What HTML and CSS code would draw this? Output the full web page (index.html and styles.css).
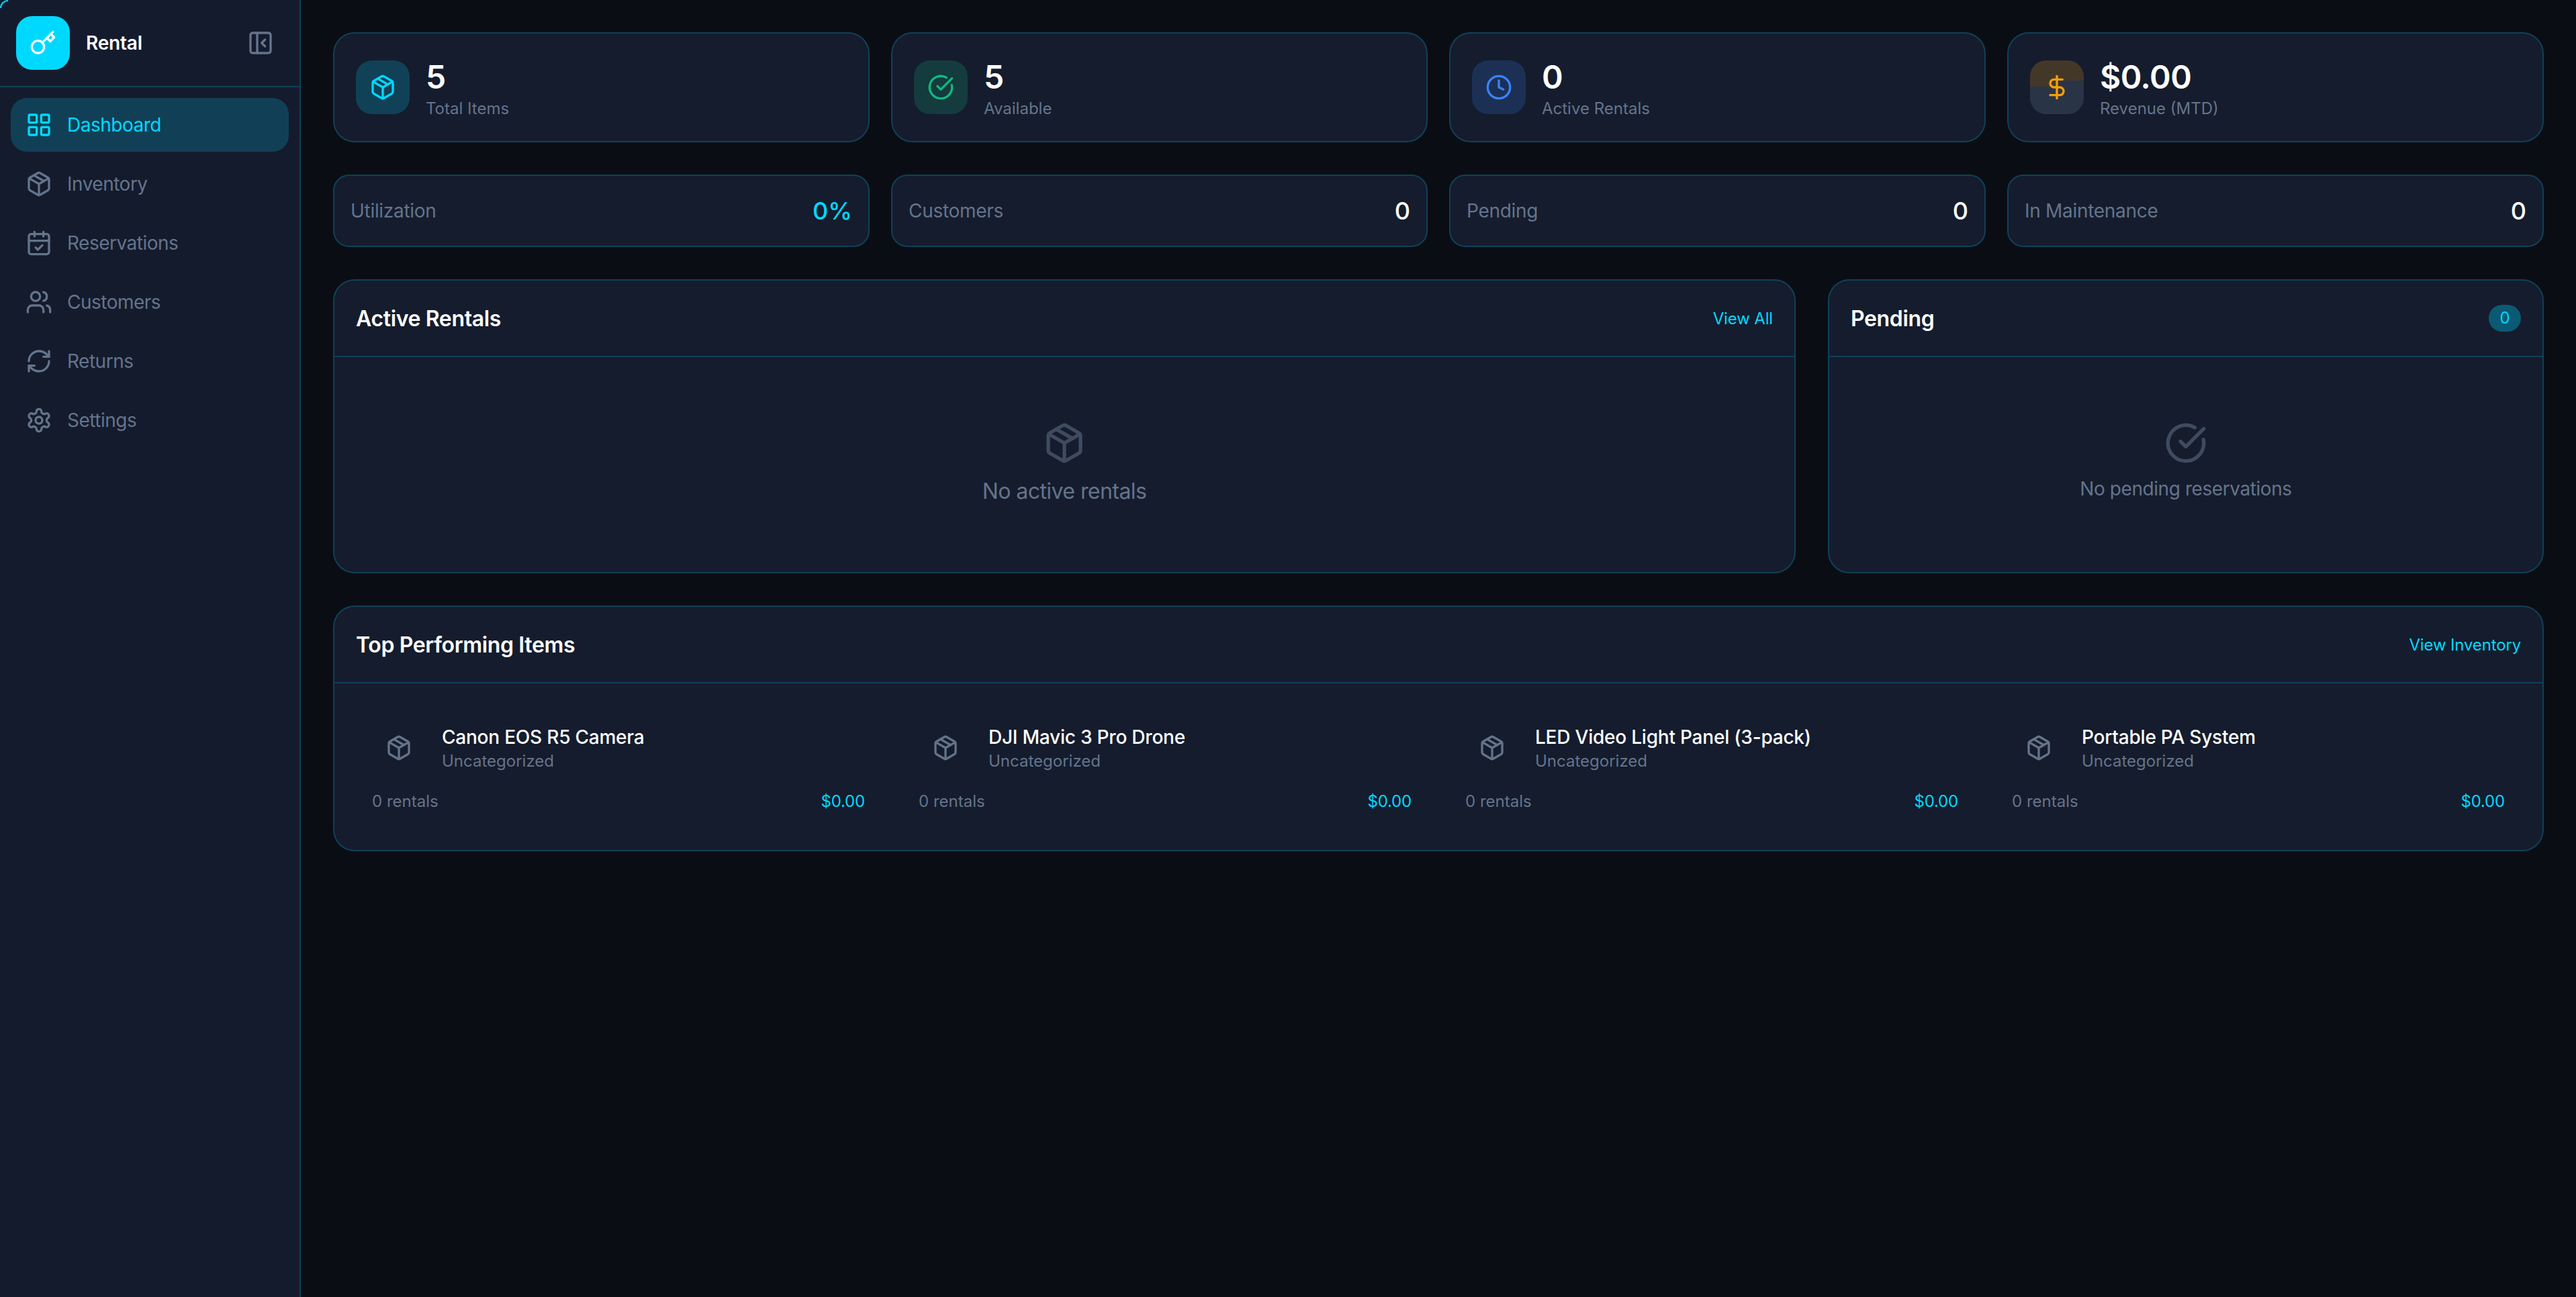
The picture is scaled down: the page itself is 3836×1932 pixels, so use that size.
FILE: index.html
```html
<!DOCTYPE html>
<html lang="en">
<head>
  <meta charset="UTF-8">
  <meta name="viewport" content="width=device-width, initial-scale=1.0">
  <title>Rental - Dashboard</title>
  <link rel="stylesheet" href="styles.css">
</head>
<body>
  <svg class="sprites" width="0" height="0" aria-hidden="true">
    <symbol id="i-key" viewBox="0 0 24 24"><circle cx="7.5" cy="15.5" r="5.5"/><path d="m21 2-9.6 9.6"/><path d="m15.5 7.5 3 3L22 7l-3-3"/></symbol>
    <symbol id="i-collapse" viewBox="0 0 24 24"><rect x="3" y="3" width="18" height="18" rx="2"/><path d="M9 3v18"/><path d="m16 15-3-3 3-3"/></symbol>
    <symbol id="i-grid" viewBox="0 0 24 24"><rect x="3" y="3" width="7" height="7" rx="1"/><rect x="14" y="3" width="7" height="7" rx="1"/><rect x="14" y="14" width="7" height="7" rx="1"/><rect x="3" y="14" width="7" height="7" rx="1"/></symbol>
    <symbol id="i-package" viewBox="0 0 24 24"><path d="m7.5 4.27 9 5.15"/><path d="M21 8a2 2 0 0 0-1-1.73l-7-4a2 2 0 0 0-2 0l-7 4A2 2 0 0 0 3 8v8a2 2 0 0 0 1 1.73l7 4a2 2 0 0 0 2 0l7-4A2 2 0 0 0 21 16Z"/><path d="m3.3 7 8.7 5 8.7-5"/><path d="M12 22V12"/></symbol>
    <symbol id="i-calendar" viewBox="0 0 24 24"><path d="M8 2v4"/><path d="M16 2v4"/><rect x="3" y="4" width="18" height="18" rx="2"/><path d="M3 10h18"/><path d="m9 16 2 2 4-4"/></symbol>
    <symbol id="i-users" viewBox="0 0 24 24"><path d="M16 21v-2a4 4 0 0 0-4-4H6a4 4 0 0 0-4 4v2"/><circle cx="9" cy="7" r="4"/><path d="M22 21v-2a4 4 0 0 0-3-3.87"/><path d="M16 3.13a4 4 0 0 1 0 7.75"/></symbol>
    <symbol id="i-refresh" viewBox="0 0 24 24"><path d="M3 12a9 9 0 0 1 9-9 9.75 9.75 0 0 1 6.74 2.74L21 8"/><path d="M21 3v5h-5"/><path d="M21 12a9 9 0 0 1-9 9 9.75 9.75 0 0 1-6.74-2.74L3 16"/><path d="M8 16H3v5"/></symbol>
    <symbol id="i-settings" viewBox="0 0 24 24"><path d="M12.22 2h-.44a2 2 0 0 0-2 2v.18a2 2 0 0 1-1 1.73l-.43.25a2 2 0 0 1-2 0l-.15-.08a2 2 0 0 0-2.73.73l-.22.38a2 2 0 0 0 .73 2.73l.15.1a2 2 0 0 1 1 1.72v.51a2 2 0 0 1-1 1.74l-.15.09a2 2 0 0 0-.73 2.73l.22.38a2 2 0 0 0 2.73.73l.15-.08a2 2 0 0 1 2 0l.43.25a2 2 0 0 1 1 1.73V20a2 2 0 0 0 2 2h.44a2 2 0 0 0 2-2v-.18a2 2 0 0 1 1-1.73l.43-.25a2 2 0 0 1 2 0l.15.08a2 2 0 0 0 2.73-.73l.22-.39a2 2 0 0 0-.73-2.73l-.15-.08a2 2 0 0 1-1-1.74v-.5a2 2 0 0 1 1-1.74l.15-.09a2 2 0 0 0 .73-2.73l-.22-.38a2 2 0 0 0-2.73-.73l-.15.08a2 2 0 0 1-2 0l-.43-.25a2 2 0 0 1-1-1.73V4a2 2 0 0 0-2-2z"/><circle cx="12" cy="12" r="3"/></symbol>
    <symbol id="i-check" viewBox="0 0 24 24"><path d="M21.801 10A10 10 0 1 1 17 3.335"/><path d="m9 11 3 3L22 4"/></symbol>
    <symbol id="i-clock" viewBox="0 0 24 24"><circle cx="12" cy="12" r="10"/><path d="M12 6v6l4 2"/></symbol>
    <symbol id="i-dollar" viewBox="0 0 24 24"><path d="M12 2v20"/><path d="M17 5H9.5a3.5 3.5 0 0 0 0 7h5a3.5 3.5 0 0 1 0 7H6"/></symbol>
  </svg>

  <div class="corner-arc"></div>

  <div class="app">
    <aside class="sidebar">
      <div class="brand">
        <div class="brand-logo"><svg class="icon"><use href="#i-key"/></svg></div>
        <span class="brand-name">Rental</span>
        <svg class="icon brand-toggle"><use href="#i-collapse"/></svg>
      </div>
      <nav class="nav">
        <a class="nav-item active"><svg class="icon"><use href="#i-grid"/></svg><span>Dashboard</span></a>
        <a class="nav-item"><svg class="icon"><use href="#i-package"/></svg><span>Inventory</span></a>
        <a class="nav-item"><svg class="icon"><use href="#i-calendar"/></svg><span>Reservations</span></a>
        <a class="nav-item"><svg class="icon"><use href="#i-users"/></svg><span>Customers</span></a>
        <a class="nav-item"><svg class="icon"><use href="#i-refresh"/></svg><span>Returns</span></a>
        <a class="nav-item"><svg class="icon"><use href="#i-settings"/></svg><span>Settings</span></a>
      </nav>
    </aside>

    <main class="main">
      <section class="stats">
        <div class="stat-card">
          <div class="stat-icon cyan"><svg class="icon"><use href="#i-package"/></svg></div>
          <div><div class="stat-value">5</div><div class="stat-label">Total Items</div></div>
        </div>
        <div class="stat-card">
          <div class="stat-icon green"><svg class="icon"><use href="#i-check"/></svg></div>
          <div><div class="stat-value">5</div><div class="stat-label">Available</div></div>
        </div>
        <div class="stat-card">
          <div class="stat-icon blue"><svg class="icon"><use href="#i-clock"/></svg></div>
          <div><div class="stat-value">0</div><div class="stat-label">Active Rentals</div></div>
        </div>
        <div class="stat-card">
          <div class="stat-icon amber"><svg class="icon"><use href="#i-dollar"/></svg></div>
          <div><div class="stat-value">$0.00</div><div class="stat-label">Revenue (MTD)</div></div>
        </div>
      </section>

      <section class="stats">
        <div class="mini-card"><span class="mini-label">Utilization</span><span class="mini-value accent">0%</span></div>
        <div class="mini-card"><span class="mini-label">Customers</span><span class="mini-value">0</span></div>
        <div class="mini-card"><span class="mini-label">Pending</span><span class="mini-value">0</span></div>
        <div class="mini-card"><span class="mini-label">In Maintenance</span><span class="mini-value">0</span></div>
      </section>

      <section class="panels">
        <div class="panel">
          <div class="panel-header">
            <h2>Active Rentals</h2>
            <a class="panel-link">View All</a>
          </div>
          <div class="empty">
            <svg class="icon empty-icon"><use href="#i-package"/></svg>
            <p class="empty-text large">No active rentals</p>
          </div>
        </div>
        <div class="panel">
          <div class="panel-header">
            <h2>Pending</h2>
            <span class="badge">0</span>
          </div>
          <div class="empty">
            <svg class="icon empty-icon"><use href="#i-check"/></svg>
            <p class="empty-text">No pending reservations</p>
          </div>
        </div>
      </section>

      <section class="panel">
        <div class="panel-header">
          <h2>Top Performing Items</h2>
          <a class="panel-link">View Inventory</a>
        </div>
        <div class="top-items">
          <div class="top-item">
            <div class="top-item-head">
              <div class="thumb"><svg class="icon"><use href="#i-package"/></svg></div>
              <div><div class="item-name">Canon EOS R5 Camera</div><div class="item-cat">Uncategorized</div></div>
            </div>
            <div class="top-item-foot"><span>0 rentals</span><span class="accent">$0.00</span></div>
          </div>
          <div class="top-item">
            <div class="top-item-head">
              <div class="thumb"><svg class="icon"><use href="#i-package"/></svg></div>
              <div><div class="item-name">DJI Mavic 3 Pro Drone</div><div class="item-cat">Uncategorized</div></div>
            </div>
            <div class="top-item-foot"><span>0 rentals</span><span class="accent">$0.00</span></div>
          </div>
          <div class="top-item">
            <div class="top-item-head">
              <div class="thumb"><svg class="icon"><use href="#i-package"/></svg></div>
              <div><div class="item-name">LED Video Light Panel (3-pack)</div><div class="item-cat">Uncategorized</div></div>
            </div>
            <div class="top-item-foot"><span>0 rentals</span><span class="accent">$0.00</span></div>
          </div>
          <div class="top-item">
            <div class="top-item-head">
              <div class="thumb"><svg class="icon"><use href="#i-package"/></svg></div>
              <div><div class="item-name">Portable PA System</div><div class="item-cat">Uncategorized</div></div>
            </div>
            <div class="top-item-foot"><span>0 rentals</span><span class="accent">$0.00</span></div>
          </div>
        </div>
      </section>
    </main>
  </div>
</body>
</html>
```

FILE: styles.css
```css
* {
  margin: 0;
  padding: 0;
  box-sizing: border-box;
}

body {
  font-family: 'Inter', 'Liberation Sans', sans-serif;
  background: #0a0e14;
  color: #fff;
  height: 100vh;
  overflow: hidden;
}

.sprites {
  position: absolute;
}

.icon {
  width: 40px;
  height: 40px;
  flex-shrink: 0;
  fill: none;
  stroke: currentColor;
  stroke-width: 2;
  stroke-linecap: round;
  stroke-linejoin: round;
}

/* Focus ring remnant in the window corner */
.corner-arc {
  position: fixed;
  top: 0;
  left: 0;
  width: 12px;
  height: 12px;
  border-top: 2px solid #00d9ff;
  border-left: 2px solid #00d9ff;
  border-top-left-radius: 12px;
  z-index: 10;
}

.app {
  display: flex;
  height: 100%;
}

/* Sidebar */
.sidebar {
  width: 448px;
  flex-shrink: 0;
  background: #141b2d;
  border-right: 2px solid #104157;
}

.brand {
  display: flex;
  align-items: center;
  gap: 24px;
  height: 130px;
  padding: 0 38px 0 24px;
  border-bottom: 2px solid #104157;
}

.brand-logo {
  width: 80px;
  height: 80px;
  display: flex;
  align-items: center;
  justify-content: center;
  background: #00d9ff;
  border-radius: 24px;
  color: #fff;
}

.brand-name {
  flex: 1;
  font-size: 28px;
  font-weight: 600;
  letter-spacing: -0.2px;
}

.brand-toggle {
  color: #64748b;
}

.nav {
  display: flex;
  flex-direction: column;
  gap: 8px;
  padding: 16px;
}

.nav-item {
  display: flex;
  align-items: center;
  gap: 22px;
  height: 80px;
  padding: 0 22px;
  border-radius: 24px;
  font-size: 28px;
  letter-spacing: -0.5px;
  color: #64748b;
}

.nav-item.active {
  background: #114056;
  color: #00d9ff;
}

/* Main */
.main {
  flex: 1;
  min-width: 0;
  padding: 48px;
  display: flex;
  flex-direction: column;
  gap: 48px;
}

.stats {
  display: grid;
  grid-template-columns: repeat(4, 1fr);
  gap: 32px;
}

.stat-card,
.mini-card,
.panel {
  background: #151c2d;
  border: 2px solid #104157;
}

.stat-card {
  display: flex;
  align-items: center;
  gap: 24px;
  padding: 32px;
  border-radius: 32px;
}

.stat-icon {
  width: 80px;
  height: 80px;
  display: flex;
  align-items: center;
  justify-content: center;
  border-radius: 24px;
}

.stat-icon.cyan { background: #104157; color: #00d9ff; }
.stat-icon.green { background: #143b3e; color: #10b981; }
.stat-icon.blue { background: #1c3056; color: #3b82f6; }

/* Two tone tile, the step sits behind the glyph */
.stat-icon.amber {
  color: #f59e0b;
  background-color: #2a3447;
  background-image: linear-gradient(#433828, #433828), linear-gradient(#433828, #433828);
  background-size: 50% 39px, 50% 30px;
  background-position: left top, right top;
  background-repeat: no-repeat;
}

.stat-value {
  font-size: 48px;
  line-height: 66px;
  margin-bottom: -2px;
  font-weight: 600;
  letter-spacing: -0.5px;
}

.stat-label {
  font-size: 24px;
  line-height: 32px;
  color: #64748b;
}

.mini-card {
  display: flex;
  align-items: center;
  justify-content: space-between;
  padding: 24px;
  border-radius: 24px;
}

.mini-label {
  font-size: 28px;
  letter-spacing: -0.3px;
  color: #64748b;
}

.mini-value {
  font-size: 36px;
  line-height: 56px;
  font-weight: 500;
}

.accent {
  color: #00d9ff;
}

.panels {
  display: grid;
  grid-template-columns: 2178px 1fr;
  gap: 48px;
}

.panel {
  border-radius: 32px;
}

.panel-header {
  display: flex;
  align-items: center;
  justify-content: space-between;
  height: 114px;
  padding: 0 32px;
  border-bottom: 2px solid #104157;
}

.panel-header h2 {
  margin-top: 2px;
  font-size: 32px;
  line-height: 48px;
  font-weight: 600;
  letter-spacing: -0.36px;
}

.panel-link {
  font-size: 24px;
  letter-spacing: -0.15px;
  color: #00d9ff;
}

.badge {
  min-width: 48px;
  height: 40px;
  padding: 0 16px;
  border-radius: 20px;
  background: #0b5a73;
  color: #00d9ff;
  font-size: 24px;
  line-height: 40px;
  text-align: center;
}

.empty {
  display: flex;
  flex-direction: column;
  align-items: center;
  padding: 96px 32px;
  gap: 16px;
  color: #64748b;
}

.empty-icon {
  width: 64px;
  height: 64px;
  color: #3e4b60;
}

.empty-text {
  font-size: 28px;
  line-height: 40px;
  letter-spacing: -0.43px;
}

.empty-text.large {
  font-size: 32px;
  line-height: 48px;
  letter-spacing: -0.55px;
}

.top-items {
  display: grid;
  grid-template-columns: repeat(4, 1fr);
  gap: 32px;
  padding: 32px;
}

.top-item {
  padding: 24px;
}

.top-item-head {
  display: flex;
  align-items: center;
  gap: 24px;
}

.thumb {
  width: 80px;
  height: 80px;
  display: flex;
  align-items: center;
  justify-content: center;
  color: #64748b;
}

.item-name {
  font-size: 28px;
  line-height: 40px;
  font-weight: 500;
  letter-spacing: -0.22px;
}

.item-cat {
  font-size: 24px;
  line-height: 32px;
  color: #64748b;
}

.top-item-foot {
  display: flex;
  justify-content: space-between;
  margin-top: 24px;
  font-size: 24px;
  line-height: 32px;
  color: #64748b;
}

.top-item-foot .accent {
  letter-spacing: -0.2px;
}
```
